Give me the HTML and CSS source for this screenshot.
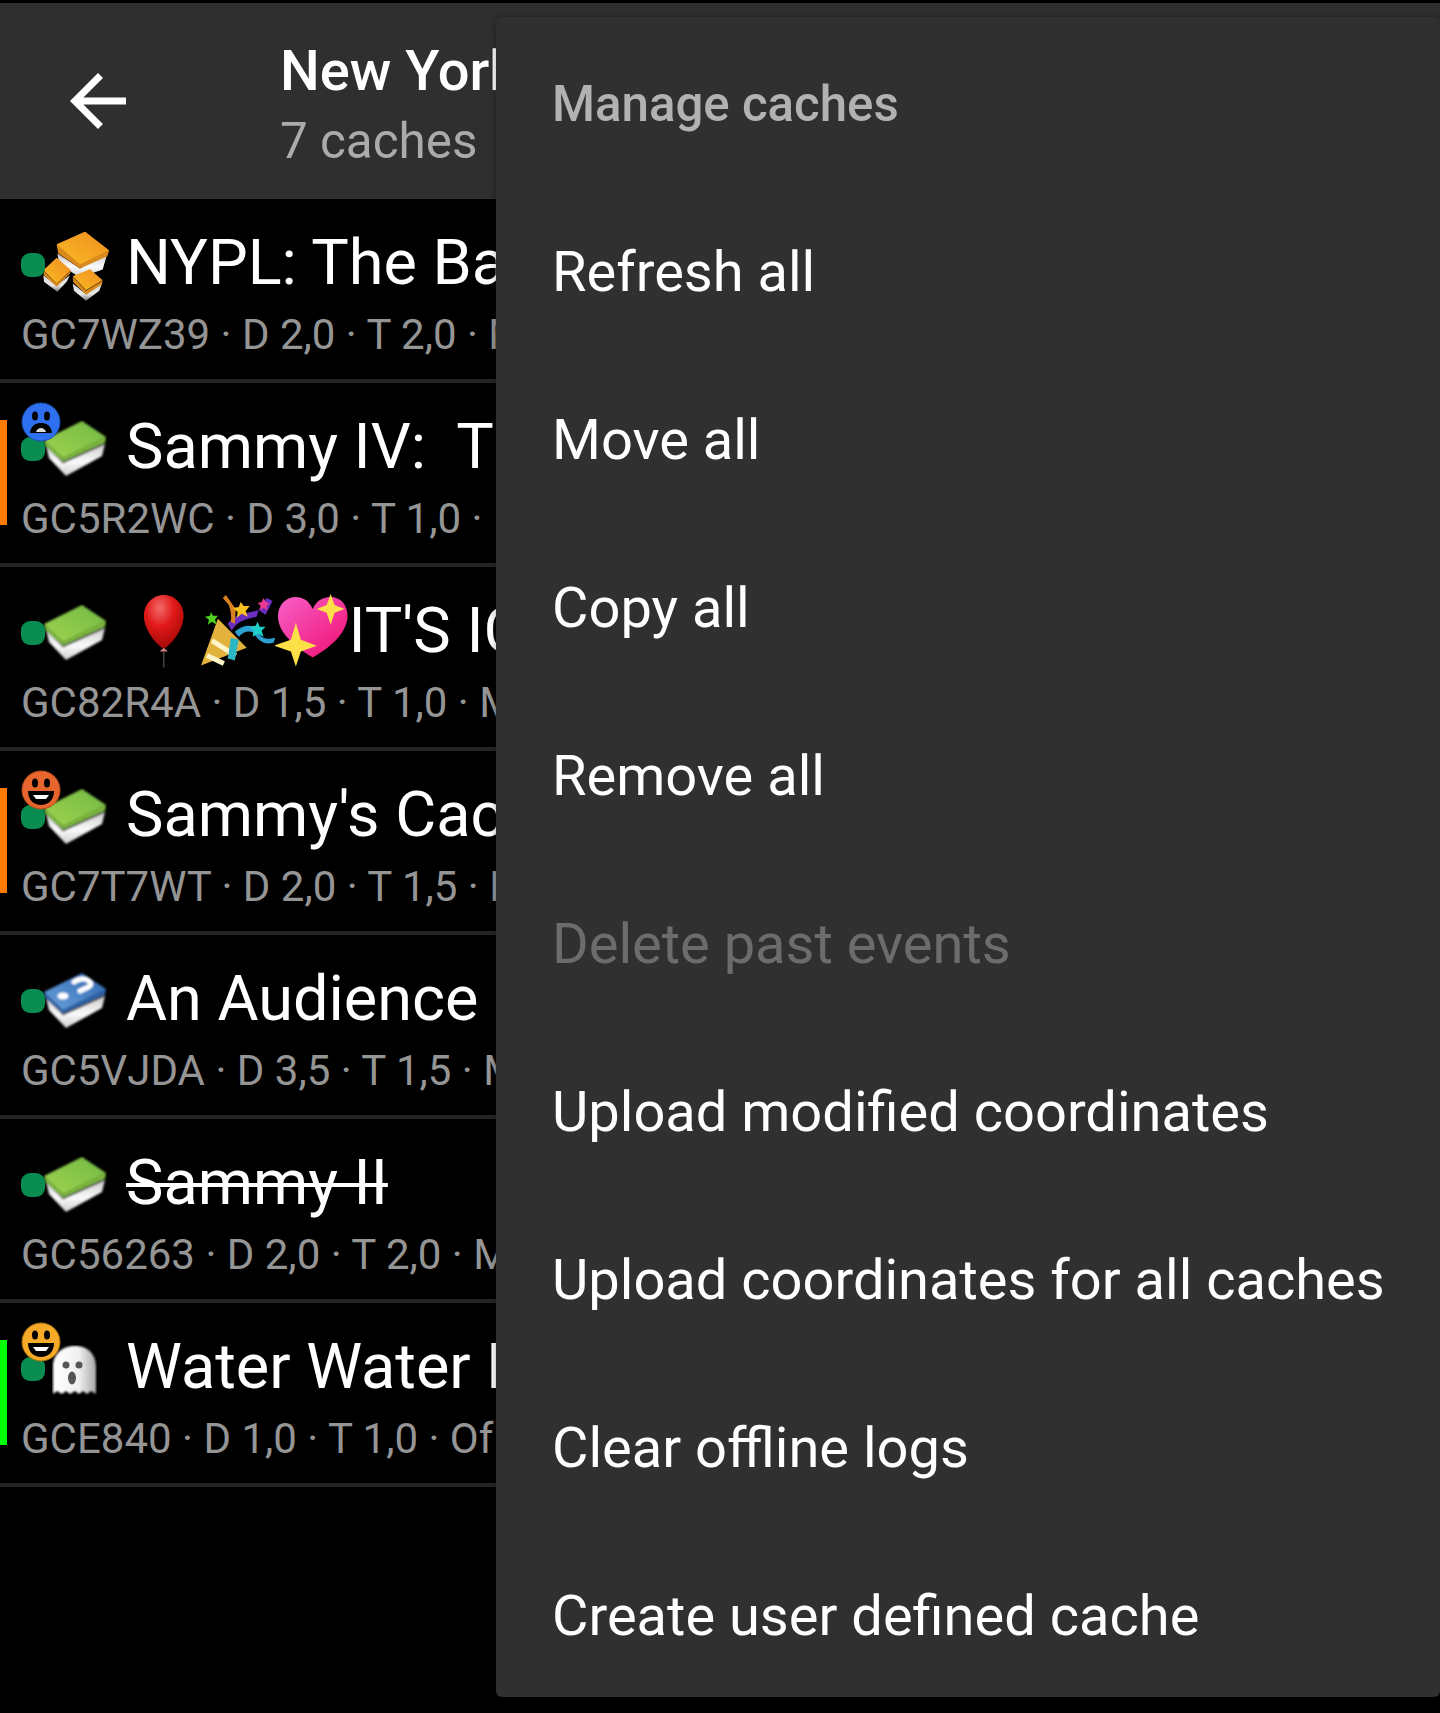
FILE: index.html
```html
<!DOCTYPE html>
<html lang="en">
<head>
<meta charset="utf-8">
<title>New York</title>
<link rel="stylesheet" href="styles.css">
</head>
<body>
<svg class="defs" width="0" height="0" aria-hidden="true">
  <defs>
    <linearGradient id="side" x1="0" y1="0" x2="0" y2="1"><stop offset="0" stop-color="#c8c8c8"/><stop offset=".55" stop-color="#fafafa"/><stop offset="1" stop-color="#cfcfcf"/></linearGradient>
    <linearGradient id="sidesmall" x1="0" y1="0" x2="0" y2="1"><stop offset="0" stop-color="#d8d8d8"/><stop offset=".6" stop-color="#e8e8e8"/><stop offset="1" stop-color="#777"/></linearGradient>
    <linearGradient id="green" x1="0" y1="1" x2="1" y2="0"><stop offset="0" stop-color="#a0d250"/><stop offset="1" stop-color="#71ba43"/></linearGradient>
    <linearGradient id="blue" x1="0" y1="1" x2="1" y2="0"><stop offset="0" stop-color="#6aa3dd"/><stop offset="1" stop-color="#2c64b0"/></linearGradient>
    <linearGradient id="orange" x1="0" y1="1" x2="1" y2="0"><stop offset="0" stop-color="#fbbc26"/><stop offset="1" stop-color="#ee8c1d"/></linearGradient>
    <linearGradient id="ghostfill" x1="0" y1="0" x2="1" y2="0"><stop offset="0" stop-color="#fff"/><stop offset=".6" stop-color="#f0f0f0"/><stop offset="1" stop-color="#a8a8a8"/></linearGradient>
    <filter id="soft" x="-10%" y="-10%" width="120%" height="120%"><feGaussianBlur stdDeviation=".8"/></filter>
    <symbol id="box" viewBox="0 0 64 58">
      <g filter="url(#soft)">
        <polygon points="3,26 20,43 62,24 59,36 23,56 6,38" fill="url(#side)"/>
        <polygon points="1,20 20,38 63,17 62,23 20,42 2,26" fill="#7ab53c"/>
        <polygon points="1,20 39,1 63,17 20,38" fill="url(#green)"/>
      </g>
    </symbol>
    <symbol id="box-blue" viewBox="0 0 64 58">
      <g filter="url(#soft)">
        <polygon points="3,26 20,43 62,24 59,36 23,56 6,38" fill="url(#side)"/>
        <polygon points="1,20 20,38 63,17 62,23 20,42 2,26" fill="#2d62a8"/>
        <polygon points="1,20 39,1 63,17 20,38" fill="url(#blue)"/>
        <path d="M31 10c4-3 12-5 16 0 3 5-5 6-10 9" fill="none" stroke="#fff" stroke-width="5" stroke-linecap="round"/>
        <ellipse cx="20" cy="24" rx="5.5" ry="3.5" fill="#fff"/>
      </g>
    </symbol>
  </defs>
</svg>
<div class="app">
  <header class="toolbar">
    <svg class="back" viewBox="0 0 24 24" aria-hidden="true"><path d="M20 11H7.83l5.59-5.59L12 4l-8 8 8 8 1.41-1.41L7.83 13H20v-2z"/></svg>
    <div class="heading">
      <div class="list-name">New York</div>
      <div class="list-count">7 caches</div>
    </div>
  </header>

  <ul class="caches">
    <li class="cache">
      <div class="headline">
        <span class="glyphs">
          <svg class="multi" viewBox="120 30 210 215" aria-hidden="true">
            <g filter="url(#soft)">
              <polygon points="172,100 240,145 322,100 308,148 240,172 178,132" fill="url(#side)"/>
              <polygon points="170,75 255,35 327,92 322,108 240,145 175,100" fill="#d98a1c"/>
              <polygon points="170,72 255,35 327,90 240,132" fill="url(#orange)"/>
              <polygon points="130,165 170,195 210,165 200,185 172,215 132,185" fill="url(#sidesmall)"/>
              <polygon points="130,152 170,190 213,152 210,160 170,200 132,165" fill="#d98a1c"/>
              <polygon points="130,150 170,113 213,150 170,190" fill="url(#orange)"/>
              <polygon points="218,190 258,222 306,190 298,212 258,242 222,212" fill="url(#sidesmall)"/>
              <polygon points="218,170 258,212 308,182 306,192 258,224 220,186" fill="#d98a1c"/>
              <polygon points="218,168 270,147 308,180 258,210" fill="url(#orange)"/>
            </g>
          </svg>
          <i class="dot"></i>
        </span>
        <span class="title">NYPL: The Ba</span>
      </div>
      <div class="meta">GC7WZ39 · D 2,0 · T 2,0 · M</div>
    </li>

    <li class="cache">
      <i class="flag flag-orange"></i>
      <div class="headline">
        <span class="glyphs">
          <svg class="box"><use href="#box"/></svg>
          <i class="dot"></i>
          <svg class="rating" viewBox="0 0 40 40" aria-hidden="true">
            <circle cx="20" cy="20" r="19" fill="#2f70f0" stroke="#1d4fb0" stroke-width="1"/>
            <ellipse cx="14" cy="14" rx="3" ry="4.5"/><ellipse cx="26" cy="14" rx="3" ry="4.5"/>
            <path d="M9 31c1-8 6-10 11-10s10 2 11 10z"/>
            <path d="M15 30c1-3 3-4 5-4s4 1 5 4z" fill="#ddd"/>
          </svg>
        </span>
        <span class="title">Sammy IV:  T</span>
      </div>
      <div class="meta">GC5R2WC · D 3,0 · T 1,0 · </div>
    </li>

    <li class="cache">
      <div class="headline">
        <span class="glyphs">
          <svg class="box"><use href="#box"/></svg>
          <i class="dot"></i>
        </span>
        <span class="title"><svg class="emoji" viewBox="0 0 75 75" role="img" aria-label="balloon">
            <defs><radialGradient id="ball" cx=".4" cy=".25" r=".8"><stop offset="0" stop-color="#f46a6a"/><stop offset=".45" stop-color="#e01818"/><stop offset="1" stop-color="#a00808"/></radialGradient></defs>
            <path d="M38 1c-11 0-20 9-20 21 0 14 12 28 18 32h4c6-4 18-18 18-32C58 10 49 1 38 1z" fill="url(#ball)"/>
            <path d="M34 58l4-4 4 4z" fill="#d98080"/><path d="M38 58v16" stroke="#444" stroke-width="1.5"/>
          </svg><svg class="emoji" viewBox="0 0 75 75" role="img" aria-label="party popper">
            <path d="M0 72L17 25 46 54z" fill="#e3b23c"/>
            <path d="M6 62l17 8M11 47l24 15" stroke="#fff4c8" stroke-width="5"/>
            <path d="M27 30c8-12 20-10 31-14l-2 7C46 25 36 27 31 37z" fill="#6a2fc0"/>
            <path d="M58 16l8-12 6 3-7 14z" fill="#6a2fc0"/>
            <path d="M34 38c10-8 18-8 26 0l-4 3c-6-5-12-4-18 2z" fill="#2a9fd0"/>
            <path d="M56 38c6 8 12 8 19 6l-2 5c-8 2-13 0-19-8z" fill="#2a9fd0"/>
            <path d="M30 44l8 2-4 21-7-2z" fill="#2bb7c4"/>
            <path d="M28 11l-6-7 3-3 10 14-1 15-4-2c1-6 0-11-2-17z" fill="#d9801f"/>
            <path d="M40 8l3 4 6 0-4 5 2 6-6-3-5 4 1-6-5-4 6-1z" fill="#f8c21c"/>
            <path d="M63 4l2 4 4 1-3 3 1 4-4-2-4 2 1-4-3-3 4-1z" fill="#e9388f"/>
            <path d="M10 18l2 4 5 0-3 4 2 5-5-3-4 3 1-5-4-3 5-1z" fill="#4fd020"/>
            <path d="M57 28l2 5 6 0-4 4 2 6-6-3-5 3 1-6-4-4 6-1z" fill="#1fd0c8"/>
          </svg><svg class="emoji emoji-last" viewBox="0 0 75 75" role="img" aria-label="sparkling heart">
            <defs><linearGradient id="heart" x1="0" y1="0" x2="1" y2="1"><stop offset="0" stop-color="#f760c8"/><stop offset="1" stop-color="#f00e70"/></linearGradient></defs>
            <path d="M38 64C12 48 3 35 3 22 3 10 12 3 21 3c8 0 14 5 17 12C41 8 47 3 56 3c10 0 17 8 17 19 0 14-12 29-35 42z" fill="url(#heart)"/>
            <path d="M21 29l5 17 16 6-16 6-5 15-5-15-17-6 17-6z" fill="#fde047"/>
            <path d="M56 0l4 11 10 4-10 4-4 12-4-12-10-4 10-4z" fill="#fde047"/>
          </svg>IT'S IC</span>
      </div>
      <div class="meta">GC82R4A · D 1,5 · T 1,0 · M</div>
    </li>

    <li class="cache">
      <i class="flag flag-orange"></i>
      <div class="headline">
        <span class="glyphs">
          <svg class="box"><use href="#box"/></svg>
          <i class="dot"></i>
          <svg class="rating" viewBox="0 0 40 40" aria-hidden="true">
            <circle cx="20" cy="20" r="19" fill="#e8652d" stroke="#b84c1c" stroke-width="1"/>
            <ellipse cx="14" cy="13" rx="3" ry="4.5"/><ellipse cx="26" cy="13" rx="3" ry="4.5"/>
            <path d="M7 21h26c0 9-6 14-13 14S7 30 7 21z"/>
            <path d="M12 25h16l-3 4H15z" fill="#fff"/>
          </svg>
        </span>
        <span class="title">Sammy's Cac</span>
      </div>
      <div class="meta">GC7T7WT · D 2,0 · T 1,5 · M</div>
    </li>

    <li class="cache">
      <div class="headline">
        <span class="glyphs">
          <svg class="box"><use href="#box-blue"/></svg>
          <i class="dot"></i>
        </span>
        <span class="title">An Audience</span>
      </div>
      <div class="meta">GC5VJDA · D 3,5 · T 1,5 · M</div>
    </li>

    <li class="cache">
      <div class="headline">
        <span class="glyphs">
          <svg class="box"><use href="#box"/></svg>
          <i class="dot"></i>
        </span>
        <span class="title archived">Sammy II</span>
      </div>
      <div class="meta">GC56263 · D 2,0 · T 2,0 · M</div>
    </li>

    <li class="cache">
      <i class="flag flag-green"></i>
      <div class="headline">
        <span class="glyphs">
          <svg class="ghost" viewBox="0 0 45 50" aria-hidden="true">
            <path d="M1 49V22C1 8 11 1 23 1s21 7 21 21v27l-5-3-4 3-4-3-4 3-4-3-5 3-4-3-4 3-5-3z" fill="url(#ghostfill)" filter="url(#soft)"/>
            <circle cx="14" cy="20" r="3.5" fill="#555"/><circle cx="27" cy="20" r="3.5" fill="#555"/>
            <ellipse cx="20" cy="33" rx="4" ry="6.5" fill="#555"/>
          </svg>
          <i class="dot"></i>
          <svg class="rating" viewBox="0 0 40 40" aria-hidden="true">
            <circle cx="20" cy="20" r="19" fill="#f5aa28" stroke="#a87010" stroke-width="1"/>
            <ellipse cx="14" cy="13" rx="3" ry="4.5"/><ellipse cx="26" cy="13" rx="3" ry="4.5"/>
            <path d="M7 21h26c0 9-6 14-13 14S7 30 7 21z"/>
            <path d="M12 25h16l-3 4H15z" fill="#fff"/>
          </svg>
        </span>
        <span class="title">Water Water E</span>
      </div>
      <div class="meta">GCE840 · D 1,0 · T 1,0 · Of</div>
    </li>
  </ul>
</div>

<nav class="menu">
  <div class="menu-item menu-title">Manage caches</div>
  <div class="menu-item">Refresh all</div>
  <div class="menu-item">Move all</div>
  <div class="menu-item">Copy all</div>
  <div class="menu-item">Remove all</div>
  <div class="menu-item disabled">Delete past events</div>
  <div class="menu-item">Upload modified coordinates</div>
  <div class="menu-item">Upload coordinates for all caches</div>
  <div class="menu-item">Clear offline logs</div>
  <div class="menu-item">Create user defined cache</div>
</nav>
</body>
</html>
```
FILE: styles.css
```css
* { box-sizing: border-box; }

html, body {
  margin: 0;
  height: 1713px;
  background: #000;
  overflow: hidden;
}

body {
  position: relative;
  font-family: Roboto, "Liberation Sans", sans-serif;
  color: #fff;
}

.defs { position: absolute; }

.app { padding-top: 3px; }

.toolbar {
  height: 196px;
  background: #2f2f2f;
  display: flex;
  align-items: center;
  padding-left: 56px;
  gap: 140px;
}

.back { width: 84px; height: 84px; fill: #fff; flex: none; }

.heading { white-space: nowrap; padding-top: 9px; }

.list-name { font-size: 56px; font-weight: 500; line-height: 71px; }

.list-count { font-size: 49.4px; line-height: 68px; color: #ababab; }

.caches { list-style: none; margin: 0; padding: 0; }

.cache {
  position: relative;
  height: 184px;
  padding: 28px 0 0 21px;
  border-bottom: 4px solid #242424;
}

.headline { display: flex; height: 72px; }

.glyphs { position: relative; flex: none; width: 105px; height: 72px; margin-top: -1px; }

.title { font-size: 63px; line-height: 72px; white-space: pre; }

.archived { text-decoration: line-through; text-decoration-thickness: 4px; }

.meta {
  font-size: 42px;
  line-height: 48px;
  margin-top: 12px;
  color: #959595;
  white-space: pre;
}

.flag { position: absolute; left: 0; top: 37px; width: 7px; height: 105px; }
.flag-orange { background: #ff7b00; }
.flag-green { background: #00ff00; }

.dot {
  position: absolute;
  left: 0;
  top: 27px;
  width: 24px;
  height: 24px;
  border-radius: 9px;
  background: #088c4f;
}

.box { position: absolute; left: 22px; top: 10px; width: 64px; height: 58px; }
.multi { position: absolute; left: 19px; top: 4px; width: 70px; height: 72px; }
.ghost { position: absolute; left: 31px; top: 15px; width: 45px; height: 50px; }
.rating { position: absolute; left: 0; top: -8px; width: 40px; height: 40px; }

.emoji { width: 74.5px; height: 74.5px; margin: -10px 0; vertical-align: -6px; }
.emoji-last { margin-right: -1px; }

.menu {
  position: absolute;
  left: 496px;
  right: 0;
  top: 17px;
  height: 1680px;
  background: #303030;
  border-radius: 6px;
  box-shadow: 0 0 6px rgba(0, 0, 0, .35);
  display: grid;
  grid-auto-rows: 168px;
}

.menu-item {
  display: flex;
  align-items: center;
  padding: 5px 0 0 56px;
  font-size: 56px;
  white-space: nowrap;
}

.menu-title { font-size: 49.2px; font-weight: 500; color: #b2b2b2; }

.disabled { color: #6c6c6c; }
```
